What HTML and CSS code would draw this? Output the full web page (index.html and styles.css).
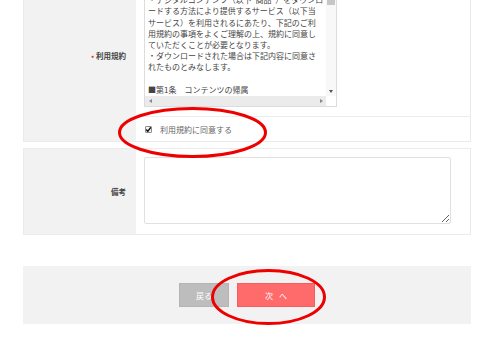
FILE: index.html
```html
<!DOCTYPE html>
<html lang="ja">
<head>
    <meta charset="UTF-8">
    <meta name="viewport" content="width=device-width, initial-scale=1.0">
    <title>ダウンロード申込み</title>
    <link rel="stylesheet" href="styles.css">
</head>
<body>
    <div class="form">
        <div class="row">
            <div class="label"><span class="req">•</span>利用規約</div>
            <div class="value">
                <div class="terms-wrap">
                    <div class="terms">
                        <div class="terms-text">
                            【利用規約】<br>
                            ・デジタルコンテンツ（以下"商品"）をダウンロ<br>
                            ードする方法により提供するサービス（以下当<br>
                            サービス）を利用されるにあたり、下記のご利<br>
                            用規約の事項をよくご理解の上、規約に同意し<br>
                            ていただくことが必要となります。<br>
                            ・ダウンロードされた場合は下記内容に同意さ<br>
                            れたものとみなします。<br>
                            <br>
                            ■第1条　コンテンツの帰属<br>
                            ・当サービスで提供する商品の著作権その他の<br>
                            権利は、当社または正当な権利者に帰属しま<br>
                            す。<br>
                            <br>
                            ■第2条　禁止事項<br>
                            ・商品の複製、転載、再配布、販売、貸与を禁<br>
                            止します。
                        </div>
                        <div class="vbar">
                            <span class="arrow arrow-up"></span>
                            <span class="thumb"></span>
                            <span class="arrow arrow-down"></span>
                        </div>
                        <div class="hbar">
                            <span class="arrow arrow-left"></span>
                            <span class="arrow arrow-right"></span>
                        </div>
                        <div class="corner"></div>
                    </div>
                </div>
                <label class="agree">
                    <input type="checkbox" checked>
                    <span>利用規約に同意する</span>
                </label>
            </div>
        </div>

        <div class="row">
            <div class="label">備考</div>
            <div class="value value-note">
                <textarea class="note"></textarea>
            </div>
        </div>
    </div>

    <div class="actions">
        <button class="btn btn-back">戻る</button>
        <button class="btn btn-next">次 へ</button>
    </div>

    <svg class="marks" width="500" height="342" viewBox="0 0 500 342">
        <ellipse cx="192.5" cy="132.5" rx="73" ry="24" />
        <ellipse cx="268.5" cy="297" rx="56" ry="26.5" />
    </svg>
</body>
</html>
```

FILE: styles.css
```css
body {
    margin: 0;
    font-family: "Noto Sans CJK JP", "Noto Sans", sans-serif;
    color: #333;
    background: #fff;
    overflow: hidden;
}

.form {
    width: 448px;
    margin: -32px 0 0 23px;
}

.row {
    display: grid;
    grid-template-columns: 112px 1fr;
    border: 1px solid #ebebeb;
}

.row + .row {
    margin-top: 6px;
}

.label {
    background: #f2f2f2;
    display: flex;
    align-items: center;
    justify-content: flex-end;
    padding-right: 10px;
    font-size: 7.5px;
    font-weight: bold;
    color: #444;
}

.req {
    color: #e53935;
    margin-right: 2px;
}

.terms-wrap {
    padding: 8px 8px 9px;
    border-bottom: 1px solid #ededed;
}

/* scroll box, bars drawn by hand */
.terms {
    width: 193px;
    height: 130px;
    box-sizing: border-box;
    border: 1px solid #dcdcdc;
    display: grid;
    grid-template-columns: 1fr 10px;
    grid-template-rows: 1fr 10px;
}

.terms-text {
    overflow: hidden;
    padding: 5px 3px 0;
    white-space: nowrap;
    font-size: 8px;
    line-height: 11.2px;
    color: #444;
}

.vbar {
    background: #f8f8f8;
    display: flex;
    flex-direction: column;
    align-items: center;
}

.thumb {
    width: 8px;
    height: 17px;
    background: #c6c6c6;
}

.hbar {
    background: #ebebeb;
    display: flex;
    justify-content: space-between;
    align-items: center;
}

.corner {
    background: #fff;
}

.arrow {
    display: flex;
    justify-content: center;
    align-items: center;
    width: 10px;
    height: 10px;
}

.arrow::before {
    content: "";
    border: 2.5px solid transparent;
}

.arrow-down {
    margin-top: auto;
}

.arrow-up::before {
    border-top-width: 0;
    border-bottom: 3px solid #555;
}

.arrow-down::before {
    border-bottom-width: 0;
    border-top: 3px solid #555;
}

.arrow-left::before {
    border-left-width: 0;
    border-right: 3px solid #888;
}

.arrow-right::before {
    border-right-width: 0;
    border-left: 3px solid #888;
}

.agree {
    display: flex;
    align-items: center;
    gap: 8px;
    height: 24px;
    padding-left: 9px;
    font-size: 8px;
    color: #666;
}

.agree input {
    appearance: none;
    -webkit-appearance: none;
    width: 7px;
    height: 7px;
    margin: 0;
    border: 1px solid #8c8c8c;
    border-radius: 1px;
    background: #f6f6f6 url("data:image/svg+xml,%3Csvg xmlns='http://www.w3.org/2000/svg' width='7' height='7'%3E%3Cpath d='M1.2 3.6l1.6 1.7 3-4' fill='none' stroke='%23111' stroke-width='1.4'/%3E%3C/svg%3E") no-repeat center;
}

.value-note {
    padding: 8px 19px 10px 8px;
}

.note {
    display: block;
    width: 100%;
    height: 67px;
    box-sizing: border-box;
    border: 1px solid #e0e0e0;
    border-radius: 2px;
    margin: 0;
}

.actions {
    width: 448px;
    height: 58px;
    margin: 31px 0 0 23px;
    background: #f2f2f2;
    display: flex;
    justify-content: center;
    align-items: center;
    gap: 8px;
}

.btn {
    height: 24px;
    border: 1px solid transparent;
    color: #fff;
    font-family: "Noto Sans CJK JP", "Noto Sans", sans-serif;
    font-size: 8px;
    padding: 0;
}

.btn-back {
    width: 50px;
    background: #bdbdbd;
    border-color: #b4b4b4;
}

.btn-next {
    width: 78px;
    background: #ff6a6a;
    border-color: #f25d5d;
    word-spacing: 4px;
}

.marks {
    position: absolute;
    top: 0;
    left: 0;
    pointer-events: none;
}

.marks ellipse {
    fill: none;
    stroke: #ee0000;
    stroke-width: 3;
}
```
